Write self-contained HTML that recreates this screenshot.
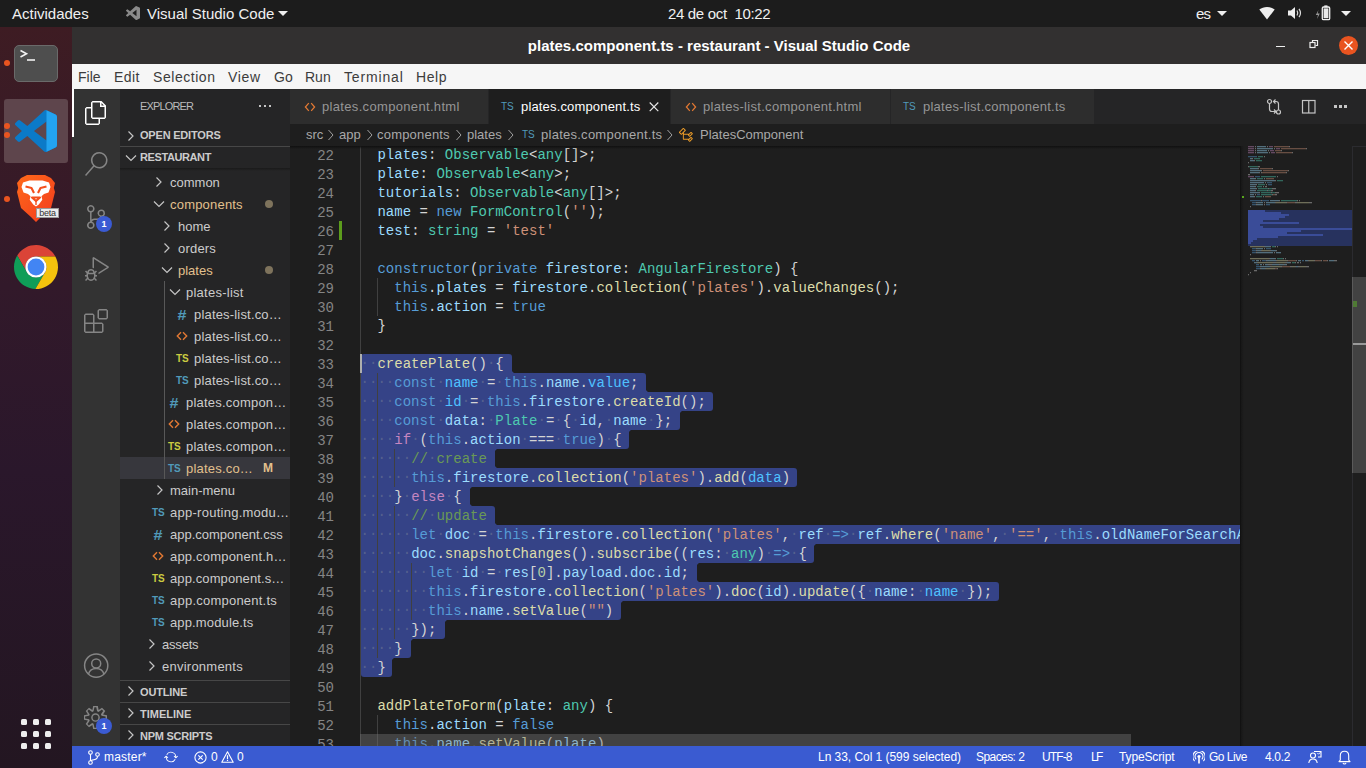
<!DOCTYPE html>
<html><head><meta charset="utf-8">
<style>
*{margin:0;padding:0;box-sizing:border-box}
html,body{width:1366px;height:768px;overflow:hidden;background:#1e1e1e;font-family:"Liberation Sans",sans-serif}
.a{position:absolute}
.t{position:absolute;white-space:pre}
#top{left:0;top:0;width:1366px;height:27px;background:#1c1c1c;color:#f0f0f0;font-size:15px}
#dock{left:0;top:27px;width:72px;height:741px;background:linear-gradient(180deg,#3e1c23 0%,#32192a 35%,#2a172b 60%,#231621 100%)}
#title{left:72px;top:27px;width:1294px;height:37px;background:#323030;color:#fff;font-weight:bold;font-size:14.5px}
#menu{left:72px;top:64px;width:1294px;height:25px;background:#f6f6f6;color:#2d2d2d;font-size:14px}
#act{left:72px;top:89px;width:48px;height:657px;background:#333333}
#side{left:120px;top:89px;width:170px;height:657px;background:#252526;color:#cccccc;font-size:13px}
#tabs{left:290px;top:89px;width:1076px;height:35px;background:#252526}
#crumb{left:290px;top:124px;width:1076px;height:22px;background:#1e1e1e;color:#a9a9a9;font-size:13px}
#ed{left:290px;top:146px;width:950px;height:600px;background:#1e1e1e;overflow:hidden}
#status{left:72px;top:746px;width:1294px;height:22px;background:#3a5bd1;color:#fff;font-size:12.5px}
.ln{position:absolute;left:0;width:44px;text-align:right;height:19px;line-height:19px;font-family:"Liberation Mono",monospace;font-size:14px;color:#858585}
.cl{position:absolute;left:70.6px;letter-spacing:0.018px;height:19px;line-height:19px;font-family:"Liberation Mono",monospace;font-size:14px;white-space:pre;color:#d4d4d4}
.sel{background:#354387;border-radius:3px}
.d{font-style:normal;color:#55618f;position:relative;top:-1px}
</style></head><body>
<div id="top" class="a"><div class="t" style="left:12px;top:4px;font-size:15px;line-height:20px">Actividades</div><svg class="a" style="left:126px;top:6px" width="14" height="14" viewBox="0 0 100 100"><path fill="#8a8a8a" d="M96.5 10.8 75.9.9a6.2 6.2 0 0 0-7.1 1.2L29.4 38 12.2 25a4.2 4.2 0 0 0-5.3.2l-5.5 5a4.2 4.2 0 0 0 0 6.2L16.3 50 1.4 63.6a4.2 4.2 0 0 0 0 6.2l5.5 5a4.2 4.2 0 0 0 5.3.2l17.2-13 39.4 36a6.2 6.2 0 0 0 7.1 1.2l20.6-9.9a6.3 6.3 0 0 0 3.5-5.6V16.4a6.3 6.3 0 0 0-3.5-5.6zM75 72.7 45.1 50 75 27.3z"/></svg><div class="t" style="left:147px;top:4px;font-size:15px;line-height:20px">Visual Studio Code</div><svg class="a" style="left:278px;top:11px" width="10" height="5"><path d="M0 0h10L5 5z" fill="#eee"/></svg><div class="t" style="left:668px;top:4px;font-size:15px;line-height:20px;letter-spacing:-0.33px">24 de oct  10:22</div><div class="t" style="left:1196px;top:4px;font-size:15px;line-height:20px;letter-spacing:-0.8px">es</div><svg class="a" style="left:1217px;top:11px" width="10" height="5"><path d="M0 0h10L5 5z" fill="#eee"/></svg><svg class="a" style="left:1259px;top:6px" width="16" height="14" viewBox="0 0 16 14"><path d="M8 13.5 0.3 3.6C2.4 2 5.1 1 8 1s5.6 1 7.7 2.6z" fill="#eee"/></svg><svg class="a" style="left:1287px;top:6px" width="16" height="14" viewBox="0 0 16 14"><path d="M1 4.5h3L8 1v12L4 9.5H1z" fill="#eee"/><path d="M10 4.5q1.5 2.5 0 5M12 2.8q3 4.2 0 8.4" stroke="#ddd" stroke-width="1.2" fill="none"/></svg><svg class="a" style="left:1314px;top:4px" width="18" height="18" viewBox="0 0 18 18"><path d="M4.5 6 1.8 11h2.2l-1 4 2.8-5.6H3.6z" fill="#9a9a9a"/><rect x="10.3" y="1.4" width="3.2" height="2" fill="#eee"/><rect x="8.3" y="3" width="7.4" height="12.6" rx="1.2" fill="none" stroke="#eee" stroke-width="1.3"/><rect x="9.6" y="4.4" width="4.8" height="9.8" fill="#e8e8e8"/></svg><svg class="a" style="left:1341px;top:11px" width="10" height="5"><path d="M0 0h10L5 5z" fill="#eee"/></svg></div><div id="dock" class="a"><div class="a" style="left:14px;top:18px;width:44px;height:37px;border-radius:5px;background:#4e4e4e;border:1px solid #6a6a6a"></div><svg class="a" style="left:19px;top:22px" width="18" height="13"><path d="M1.5 1.5 7.5 4.8 1.5 8" stroke="#f2f2f2" stroke-width="1.6" fill="none"/><path d="M8 11h8" stroke="#f2f2f2" stroke-width="1.6"/></svg><div class="a" style="left:4px;top:33px;width:6px;height:6px;border-radius:3px;background:#e95420"></div><div class="a" style="left:4px;top:72px;width:64px;height:64px;border-radius:3px;background:#5e454c"></div><div class="a" style="left:4px;top:96px;width:6px;height:6px;border-radius:3px;background:#e95420"></div><div class="a" style="left:4px;top:105px;width:6px;height:6px;border-radius:3px;background:#e95420"></div><svg class="a" style="left:15px;top:83px" width="42" height="42" viewBox="0 0 100 100"><path fill="#0b7ac8" d="M96.5 10.8 75.9.9a6.2 6.2 0 0 0-7.1 1.2L29.4 38 12.2 25a4.2 4.2 0 0 0-5.3.2l-5.5 5a4.2 4.2 0 0 0 0 6.2L16.3 50 1.4 63.6a4.2 4.2 0 0 0 0 6.2l5.5 5a4.2 4.2 0 0 0 5.3.2l17.2-13 39.4 36a6.2 6.2 0 0 0 7.1 1.2l20.6-9.9a6.3 6.3 0 0 0 3.5-5.6V16.4a6.3 6.3 0 0 0-3.5-5.6zM75 72.7 45.1 50 75 27.3z"/><path fill="#23a3f0" d="M75 0.5 96.5 10.8a6.3 6.3 0 0 1 3.5 5.6v67.2a6.3 6.3 0 0 1-3.5 5.6L75 99.5z"/></svg><svg class="a" style="left:15px;top:147px" width="42" height="49" viewBox="0 0 42 49"><defs><linearGradient id="bg1" x1="0" y1="0" x2="1" y2="1"><stop offset="0" stop-color="#ff6a1a"/><stop offset="1" stop-color="#f23a1e"/></linearGradient></defs><path d="M6 4 12 1h18l6 3 4 5-1.2 5 1.2 4-4 16-10 9-5 5-5-5-10-9-4-16 1.2-4L2 9z" fill="url(#bg1)"/><path d="M8 8.5 14.5 6.5h13l6.5 2 1.5 4.5-2 5.5-4.5 1.5-2.5 2.2 0.8 3.5-3.5 4.8-2.8 2-2.8-2-3.5-4.8 0.8-3.5-2.5-2.2-4.5-1.5-2-5.5z" fill="#ffffff"/><path d="M10.5 12.5 16.5 14 19 19M31.5 12.5 25.5 14 23 19M17 23.5h8l-4 3.5z" fill="none" stroke="#f4501e" stroke-width="2.1" stroke-linejoin="round"/><path d="M21 27v4" stroke="#f4501e" stroke-width="1.4"/></svg><div class="a" style="left:36px;top:181px;width:23px;height:10px;background:#ececec;border:1px solid #9a9a9a;font-size:9px;line-height:8px;color:#333;text-align:center;letter-spacing:-0.2px">beta</div><div class="a" style="left:4px;top:169px;width:6px;height:6px;border-radius:3px;background:#e95420"></div><svg class="a" style="left:14px;top:218px" width="44" height="44" viewBox="-22 -22 44 44"><path d="M19.33 -10.50 A22 22 0 0 0 -18.76 -11.49 L-9.09 5.25 A10.5 10.5 0 0 1 0.00 -10.50 Z" fill="#db4437"/><path d="M19.33 -10.50 A22 22 0 0 0 -18.76 -11.49 L-9.09 5.25 A10.5 10.5 0 0 1 0.00 -10.50 Z" fill="#0f9d58" transform="rotate(-120)"/><path d="M19.33 -10.50 A22 22 0 0 0 -18.76 -11.49 L-9.09 5.25 A10.5 10.5 0 0 1 0.00 -10.50 Z" fill="#f4c20d" transform="rotate(120)"/><circle r="10.6" fill="#fff"/><circle r="8.4" fill="#4285f4"/></svg><div class="a" style="left:21px;top:692px;width:6px;height:6px;border-radius:1.5px;background:#eeeeee"></div><div class="a" style="left:21px;top:704px;width:6px;height:6px;border-radius:1.5px;background:#eeeeee"></div><div class="a" style="left:21px;top:716px;width:6px;height:6px;border-radius:1.5px;background:#eeeeee"></div><div class="a" style="left:33px;top:692px;width:6px;height:6px;border-radius:1.5px;background:#eeeeee"></div><div class="a" style="left:33px;top:704px;width:6px;height:6px;border-radius:1.5px;background:#eeeeee"></div><div class="a" style="left:33px;top:716px;width:6px;height:6px;border-radius:1.5px;background:#eeeeee"></div><div class="a" style="left:45px;top:692px;width:6px;height:6px;border-radius:1.5px;background:#eeeeee"></div><div class="a" style="left:45px;top:704px;width:6px;height:6px;border-radius:1.5px;background:#eeeeee"></div><div class="a" style="left:45px;top:716px;width:6px;height:6px;border-radius:1.5px;background:#eeeeee"></div></div><div id="title" class="a"><div class="t" style="left:0px;top:10px;width:1294px;text-align:center;font-size:15px;line-height:18px;font-weight:bold;left:0">plates.component.ts - restaurant - Visual Studio Code</div><div class="a" style="left:1204px;top:19px;width:9px;height:1.2px;background:#eee"></div><svg class="a" style="left:1237px;top:12px" width="10" height="10"><rect x="1" y="3.5" width="5" height="5" fill="none" stroke="#eee" stroke-width="1.2"/><path d="M3.5 3.5V1.5h5v5h-2" fill="none" stroke="#eee" stroke-width="1.2"/></svg><div class="a" style="left:1267px;top:9px;width:19px;height:19px;border-radius:50%;background:#e95420"></div><svg class="a" style="left:1271px;top:13px" width="11" height="11"><path d="M1.5 1.5l8 8M9.5 1.5l-8 8" stroke="#fff" stroke-width="1.4"/></svg></div><div id="menu" class="a"><div class="t" style="left:6px;top:5px;font-size:14px;line-height:17px;color:#3c3c3c;letter-spacing:0px">File</div><div class="t" style="left:42px;top:5px;font-size:14px;line-height:17px;color:#3c3c3c;letter-spacing:0.4px">Edit</div><div class="t" style="left:81px;top:5px;font-size:14px;line-height:17px;color:#3c3c3c;letter-spacing:0.55px">Selection</div><div class="t" style="left:156px;top:5px;font-size:14px;line-height:17px;color:#3c3c3c;letter-spacing:0.7px">View</div><div class="t" style="left:202px;top:5px;font-size:14px;line-height:17px;color:#3c3c3c;letter-spacing:0px">Go</div><div class="t" style="left:233px;top:5px;font-size:14px;line-height:17px;color:#3c3c3c;letter-spacing:0px">Run</div><div class="t" style="left:272px;top:5px;font-size:14px;line-height:17px;color:#3c3c3c;letter-spacing:0.85px">Terminal</div><div class="t" style="left:344px;top:5px;font-size:14px;line-height:17px;color:#3c3c3c;letter-spacing:0.6px">Help</div></div><div id="act" class="a"><div class="a" style="left:0;top:0;width:2px;height:48px;background:#ffffff"></div><svg class="a" style="left:12px;top:12px" width="24" height="24" viewBox="0 0 24 24"><path fill="#ffffff" d="M17.5 0h-9L7 1.5V6H2.5L1 7.5v15.07L2.5 24h12.07L16 22.57V18h4.7l1.3-1.43V4.5L17.5 0zm0 2.12l2.38 2.38H17.5V2.12zm-3 20.38h-12v-15H7v9.07L8.5 18h6v4.5zm6-6h-12v-15H16V6h4.5v10.5z"/></svg><svg class="a" style="left:11.5px;top:63.3px" width="24" height="24" viewBox="0 0 24 24"><path fill="#858585" d="M15.25 0a8.25 8.25 0 0 0-6.18 13.72L1 22.88l1.12 1 8.05-9.12A8.251 8.251 0 1 0 15.25.01V0zm0 15a6.75 6.75 0 1 1 0-13.5 6.75 6.75 0 0 1 0 13.5z"/></svg><svg class="a" style="left:12px;top:115.6px" width="24" height="24" viewBox="0 0 24 24"><path fill="#858585" d="M21.007 8.222A3.738 3.738 0 0 0 15.045 5.2a3.737 3.737 0 0 0 1.156 6.583 2.988 2.988 0 0 1-2.668 1.67h-2.99a4.456 4.456 0 0 0-2.989 1.165V7.4a3.737 3.737 0 1 0-1.494 0v9.117a3.776 3.776 0 1 0 1.816.099 2.99 2.99 0 0 1 2.668-1.667h2.99a4.484 4.484 0 0 0 4.223-3.039 3.736 3.736 0 0 0 3.25-3.687zM4.565 3.738a2.242 2.242 0 1 1 4.484 0 2.242 2.242 0 0 1-4.484 0zm4.484 16.441a2.242 2.242 0 1 1-4.484 0 2.242 2.242 0 0 1 4.484 0zm8.221-9.715a2.242 2.242 0 1 1 0-4.485 2.242 2.242 0 0 1 0 4.485z"/></svg><div class="a" style="left:24px;top:127px;width:16px;height:16px;border-radius:8px;background:#3b5bd3;color:#fff;font-size:9px;font-weight:bold;line-height:16px;text-align:center">1</div><svg class="a" style="left:12.5px;top:168px" width="24" height="24" viewBox="0 0 24 24"><path fill="#858585" d="M10.94 13.5l-1.32 1.32a3.73 3.73 0 0 0-7.24 0L1.06 13.5 0 14.56l1.72 1.72-.22.22V18H0v1.5h1.5v.08c.077.489.214.966.41 1.42L0 22.940 1.06 24l1.650-1.65A4.308 4.308 0 0 0 6 24a4.31 4.31 0 0 0 3.29-1.65L10.94 24 12 22.94 10.09 21c.198-.464.336-.951.41-1.45v-.1H12V18h-1.5v-1.5l-.22-.22L12 14.56l-1.06-1.06zM6 13.5a2.25 2.25 0 0 1 2.25 2.25h-4.5A2.25 2.25 0 0 1 6 13.5zm3 6a3.33 3.330 0 0 1-3 3 3.33 3.33 0 0 1-3-3v-2.25h6v2.25zm14.76-9.9v1.26L13.5 17.37V15.6l8.5-5.37L9 2v9.46a5.07 5.07 0 0 0-1.5-.72V.63L8.64 0l15.12 9.6z"/></svg><svg class="a" style="left:12px;top:220px" width="24" height="24" viewBox="0 0 24 24"><path fill="#858585" d="M13.5 1.5L15 0h7.5L24 1.5V9l-1.5 1.5H15L13.5 9V1.5zm1.5 0V9h7.5V1.5H15zM0 15V6l1.5-1.5H9L10.5 6v7.5H18l1.5 1.5v7.5L18 24H1.5L0 22.5V15zm9-1.5V6H1.5v7.5H9zM9 15H1.5v7.5H9V15zm1.5 7.5H18V15h-7.5v7.5z"/></svg><svg class="a" style="left:11px;top:564px" width="26" height="26" viewBox="0 0 26 26"><circle cx="13.2" cy="12.6" r="11.6" fill="none" stroke="#858585" stroke-width="1.5"/><circle cx="13.2" cy="10.5" r="4.5" fill="none" stroke="#858585" stroke-width="1.5"/><path d="M5.5 21q1.5-5.5 7.7-5.5t7.7 5.5" fill="none" stroke="#858585" stroke-width="1.5"/></svg><svg class="a" style="left:12px;top:617px" width="23" height="23" viewBox="0 0 24 24"><path fill="#858585" d="M19.85 8.75l4.15.83v4.84l-4.15.83 2.35 3.52-3.43 3.43-3.52-2.35-.83 4.15H9.58l-.83-4.15-3.52 2.35-3.43-3.43 2.35-3.52L0 14.42V9.58l4.15-.83L1.8 5.23 5.23 1.8l3.52 2.35L9.580 0h4.84l.83 4.15 3.52-2.35 3.43 3.43-2.35 3.52zm-1.57 5.07l4.22-.84v-1.96l-4.22-.84-.6-1.45 2.38-3.58-1.39-1.39-3.58 2.39-1.45-.6-.84-4.22h-1.96l-.84 4.22-1.45.6-3.58-2.38-1.39 1.39 2.39 3.58-.6 1.45-4.22.84v1.96l4.22.84.6 1.45-2.38 3.58 1.39 1.39 3.58-2.39 1.45.6.84 4.22h1.960l.84-4.22 1.45-.6 3.58 2.38 1.39-1.39-2.39-3.58.6-1.45zM12 7.5a4.5 4.5 0 1 1 0 9 4.5 4.5 0 0 1 0-9zm0 1.5a3 3 0 1 0 0 6 3 3 0 0 0 0-6z"/></svg><div class="a" style="left:24px;top:629px;width:16px;height:16px;border-radius:8px;background:#3b5bd3;color:#fff;font-size:9px;font-weight:bold;line-height:16px;text-align:center">1</div></div><div id="side" class="a"><div class="t" style="left:20px;top:10px;font-size:11px;line-height:14px;color:#bbbbbb;letter-spacing:-0.85px">EXPLORER</div><div class="a" style="left:139px;top:16px;width:2px;height:2px;background:#c5c5c5"></div><div class="a" style="left:144px;top:16px;width:2px;height:2px;background:#c5c5c5"></div><div class="a" style="left:149px;top:16px;width:2px;height:2px;background:#c5c5c5"></div><svg class="a" style="left:6.5px;top:41px" width="8" height="12"><path d="M1.5 1.5 6 6 1.5 10.5" fill="none" stroke="#c5c5c5" stroke-width="1.2"/></svg><div class="t" style="left:20px;top:39px;font-size:11px;line-height:14px;font-weight:bold;color:#cccccc;letter-spacing:-0.2px">OPEN EDITORS</div><div class="a" style="left:0;top:57px;width:170px;height:1px;background:#474747"></div><svg class="a" style="left:5px;top:65px" width="12" height="8"><path d="M1 1.5 6 6.5 11 1.5" fill="none" stroke="#c5c5c5" stroke-width="1.2"/></svg><div class="t" style="left:20px;top:61px;font-size:11px;line-height:14px;font-weight:bold;color:#cccccc;letter-spacing:-0.4px">RESTAURANT</div><div class="a" style="left:0;top:79px;width:170px;height:3px;background:linear-gradient(#1a1a1a,rgba(37,37,38,0))"></div><div class="a" style="left:0;top:368px;width:170px;height:22px;background:#37373d"></div><div class="a" style="left:44px;top:192px;width:1px;height:198px;background:#585858"></div><svg class="a" style="left:34.8px;top:87px" width="8" height="12"><path d="M1.5 1.5 6 6 1.5 10.5" fill="none" stroke="#c5c5c5" stroke-width="1.2"/></svg><div class="t" style="left:50px;top:83px;font-size:13px;line-height:22px;color:#cccccc;letter-spacing:0px">common</div><svg class="a" style="left:33.2px;top:111px" width="12" height="8"><path d="M1 1.5 6 6.5 11 1.5" fill="none" stroke="#c5c5c5" stroke-width="1.2"/></svg><div class="t" style="left:50px;top:105px;font-size:13px;line-height:22px;color:#e2c08d;letter-spacing:0.2px">components</div><div class="a" style="left:145px;top:111px;width:8px;height:8px;border-radius:4px;background:#7e735c"></div><svg class="a" style="left:42.8px;top:131px" width="8" height="12"><path d="M1.5 1.5 6 6 1.5 10.5" fill="none" stroke="#c5c5c5" stroke-width="1.2"/></svg><div class="t" style="left:58px;top:127px;font-size:13px;line-height:22px;color:#cccccc;letter-spacing:0px">home</div><svg class="a" style="left:42.8px;top:153px" width="8" height="12"><path d="M1.5 1.5 6 6 1.5 10.5" fill="none" stroke="#c5c5c5" stroke-width="1.2"/></svg><div class="t" style="left:58px;top:149px;font-size:13px;line-height:22px;color:#cccccc;letter-spacing:0.2px">orders</div><svg class="a" style="left:41.2px;top:177px" width="12" height="8"><path d="M1 1.5 6 6.5 11 1.5" fill="none" stroke="#c5c5c5" stroke-width="1.2"/></svg><div class="t" style="left:58px;top:171px;font-size:13px;line-height:22px;color:#e2c08d;letter-spacing:0px">plates</div><div class="a" style="left:145px;top:177px;width:8px;height:8px;border-radius:4px;background:#7e735c"></div><svg class="a" style="left:49.2px;top:199px" width="12" height="8"><path d="M1 1.5 6 6.5 11 1.5" fill="none" stroke="#c5c5c5" stroke-width="1.2"/></svg><div class="t" style="left:66px;top:193px;font-size:13px;line-height:22px;color:#cccccc;letter-spacing:0.25px">plates-list</div><div class="t" style="left:58px;top:215px;font-size:14px;line-height:22px;font-weight:bold;color:#519aba;transform:scaleX(1.15)">#</div><div class="t" style="left:74px;top:215px;font-size:13px;line-height:22px;color:#cccccc;letter-spacing:0.18px">plates-list.co…</div><svg class="a" style="left:56px;top:242px" width="12" height="10"><path d="M5 1.2 1.3 5 5 8.8M7 1.2 10.7 5 7 8.8" fill="none" stroke="#e37933" stroke-width="1.4"/></svg><div class="t" style="left:74px;top:237px;font-size:13px;line-height:22px;color:#cccccc;letter-spacing:0.18px">plates-list.co…</div><div class="t" style="left:56px;top:259px;font-size:10px;line-height:22px;font-weight:bold;color:#cbcb41">TS</div><div class="t" style="left:74px;top:259px;font-size:13px;line-height:22px;color:#cccccc;letter-spacing:0.18px">plates-list.co…</div><div class="t" style="left:56px;top:281px;font-size:10px;line-height:22px;font-weight:bold;color:#519aba">TS</div><div class="t" style="left:74px;top:281px;font-size:13px;line-height:22px;color:#cccccc;letter-spacing:0.18px">plates-list.co…</div><div class="t" style="left:50px;top:303px;font-size:14px;line-height:22px;font-weight:bold;color:#519aba;transform:scaleX(1.15)">#</div><div class="t" style="left:66px;top:303px;font-size:13px;line-height:22px;color:#cccccc;letter-spacing:0.21px">plates.compon…</div><svg class="a" style="left:48px;top:330px" width="12" height="10"><path d="M5 1.2 1.3 5 5 8.8M7 1.2 10.7 5 7 8.8" fill="none" stroke="#e37933" stroke-width="1.4"/></svg><div class="t" style="left:66px;top:325px;font-size:13px;line-height:22px;color:#cccccc;letter-spacing:0.21px">plates.compon…</div><div class="t" style="left:48px;top:347px;font-size:10px;line-height:22px;font-weight:bold;color:#cbcb41">TS</div><div class="t" style="left:66px;top:347px;font-size:13px;line-height:22px;color:#cccccc;letter-spacing:0.21px">plates.compon…</div><div class="t" style="left:48px;top:369px;font-size:10px;line-height:22px;font-weight:bold;color:#519aba">TS</div><div class="t" style="left:66px;top:369px;font-size:13px;line-height:22px;color:#e2c08d;letter-spacing:0.2px">plates.co…</div><div class="t" style="left:143px;top:368px;font-size:12px;line-height:22px;font-weight:bold;color:#e2c08d">M</div><svg class="a" style="left:35.8px;top:395px" width="8" height="12"><path d="M1.5 1.5 6 6 1.5 10.5" fill="none" stroke="#c5c5c5" stroke-width="1.2"/></svg><div class="t" style="left:50px;top:391px;font-size:13px;line-height:22px;color:#cccccc;letter-spacing:0px">main-menu</div><div class="t" style="left:32px;top:413px;font-size:10px;line-height:22px;font-weight:bold;color:#519aba">TS</div><div class="t" style="left:50px;top:413px;font-size:13px;line-height:22px;color:#cccccc;letter-spacing:0.26px">app-routing.modu…</div><div class="t" style="left:34px;top:435px;font-size:14px;line-height:22px;font-weight:bold;color:#519aba;transform:scaleX(1.15)">#</div><div class="t" style="left:50px;top:435px;font-size:13px;line-height:22px;color:#cccccc;letter-spacing:0px">app.component.css</div><svg class="a" style="left:32px;top:462px" width="12" height="10"><path d="M5 1.2 1.3 5 5 8.8M7 1.2 10.7 5 7 8.8" fill="none" stroke="#e37933" stroke-width="1.4"/></svg><div class="t" style="left:50px;top:457px;font-size:13px;line-height:22px;color:#cccccc;letter-spacing:0.2px">app.component.h…</div><div class="t" style="left:32px;top:479px;font-size:10px;line-height:22px;font-weight:bold;color:#cbcb41">TS</div><div class="t" style="left:50px;top:479px;font-size:13px;line-height:22px;color:#cccccc;letter-spacing:0.1px">app.component.s…</div><div class="t" style="left:32px;top:501px;font-size:10px;line-height:22px;font-weight:bold;color:#519aba">TS</div><div class="t" style="left:50px;top:501px;font-size:13px;line-height:22px;color:#cccccc;letter-spacing:0.23px">app.component.ts</div><div class="t" style="left:32px;top:523px;font-size:10px;line-height:22px;font-weight:bold;color:#519aba">TS</div><div class="t" style="left:50px;top:523px;font-size:13px;line-height:22px;color:#cccccc;letter-spacing:0.14px">app.module.ts</div><svg class="a" style="left:27.8px;top:549px" width="8" height="12"><path d="M1.5 1.5 6 6 1.5 10.5" fill="none" stroke="#c5c5c5" stroke-width="1.2"/></svg><div class="t" style="left:42px;top:545px;font-size:13px;line-height:22px;color:#cccccc;letter-spacing:-0.2px">assets</div><svg class="a" style="left:27.8px;top:571px" width="8" height="12"><path d="M1.5 1.5 6 6 1.5 10.5" fill="none" stroke="#c5c5c5" stroke-width="1.2"/></svg><div class="t" style="left:42px;top:567px;font-size:13px;line-height:22px;color:#cccccc;letter-spacing:0.24px">environments</div><div class="a" style="left:0;top:591px;width:170px;height:1px;background:#474747"></div><svg class="a" style="left:6.5px;top:596px" width="8" height="12"><path d="M1.5 1.5 6 6 1.5 10.5" fill="none" stroke="#c5c5c5" stroke-width="1.2"/></svg><div class="t" style="left:20px;top:596px;font-size:11px;line-height:14px;font-weight:bold;color:#cccccc;letter-spacing:-0.15px">OUTLINE</div><div class="a" style="left:0;top:613px;width:170px;height:1px;background:#474747"></div><svg class="a" style="left:6.5px;top:618px" width="8" height="12"><path d="M1.5 1.5 6 6 1.5 10.5" fill="none" stroke="#c5c5c5" stroke-width="1.2"/></svg><div class="t" style="left:20px;top:618px;font-size:11px;line-height:14px;font-weight:bold;color:#cccccc;letter-spacing:0px">TIMELINE</div><div class="a" style="left:0;top:635px;width:170px;height:1px;background:#474747"></div><svg class="a" style="left:6.5px;top:640px" width="8" height="12"><path d="M1.5 1.5 6 6 1.5 10.5" fill="none" stroke="#c5c5c5" stroke-width="1.2"/></svg><div class="t" style="left:20px;top:640px;font-size:11px;line-height:14px;font-weight:bold;color:#cccccc;letter-spacing:-0.25px">NPM SCRIPTS</div></div><div id="tabs" class="a"><div class="a" style="left:0px;top:0;width:199px;height:35px;background:#2d2d2d;border-right:1px solid #252526"></div><svg class="a" style="left:14px;top:13px" width="12" height="10"><path d="M4.8 1.2 1.4 5 4.8 8.8M7.2 1.2 10.6 5 7.2 8.8" fill="none" stroke="#e37933" stroke-width="1.25"/></svg><div class="t" style="left:32px;top:9px;font-size:13px;line-height:17px;letter-spacing:0.33px;color:#969696">plates.component.html</div><div class="a" style="left:199px;top:0;width:182px;height:35px;background:#1e1e1e;border-right:1px solid #252526"></div><div class="t" style="left:211px;top:7px;font-size:10px;line-height:22px;color:#519aba">TS</div><div class="t" style="left:231px;top:9px;font-size:13px;line-height:17px;letter-spacing:0.16px;color:#ffffff">plates.component.ts</div><svg class="a" style="left:358px;top:12px" width="12" height="12"><path d="M1.7 1.5l8.6 8.6M10.3 1.5l-8.6 8.6" stroke="#e8e8e8" stroke-width="1.15"/></svg><div class="a" style="left:381px;top:0;width:220px;height:35px;background:#2d2d2d;border-right:1px solid #252526"></div><svg class="a" style="left:395px;top:13px" width="12" height="10"><path d="M4.8 1.2 1.4 5 4.8 8.8M7.2 1.2 10.6 5 7.2 8.8" fill="none" stroke="#e37933" stroke-width="1.25"/></svg><div class="t" style="left:413px;top:9px;font-size:13px;line-height:17px;letter-spacing:0.3px;color:#969696">plates-list.component.html</div><div class="a" style="left:601px;top:0;width:204px;height:35px;background:#2d2d2d;border-right:1px solid #252526"></div><div class="t" style="left:613px;top:7px;font-size:10px;line-height:22px;color:#519aba">TS</div><div class="t" style="left:633px;top:9px;font-size:13px;line-height:17px;letter-spacing:0.25px;color:#969696">plates-list.component.ts</div><svg class="a" style="left:976px;top:9px" width="18" height="18" viewBox="0 0 18 18"><circle cx="3.5" cy="3.5" r="2" fill="none" stroke="#c5c5c5" stroke-width="1.2"/><circle cx="12.5" cy="14" r="2" fill="none" stroke="#c5c5c5" stroke-width="1.2"/><path d="M3.5 5.5v5.5q0 2.5 2.5 2.5h3.5M8 11.5l2 2-2 2M12.5 12v-6q0-2.5-2.5-2.5H7.5M9.5 1.5l-2 2 2 2" fill="none" stroke="#c5c5c5" stroke-width="1.2"/></svg><svg class="a" style="left:1011px;top:10px" width="16" height="16" viewBox="0 0 16 16"><rect x="1.5" y="1.5" width="12.5" height="12.5" fill="none" stroke="#c5c5c5" stroke-width="1.2"/><path d="M7.75 1.5v12.5" stroke="#c5c5c5" stroke-width="1.2"/></svg><div class="a" style="left:1044px;top:16px;width:2.5px;height:2.5px;background:#c5c5c5"></div><div class="a" style="left:1049px;top:16px;width:2.5px;height:2.5px;background:#c5c5c5"></div><div class="a" style="left:1054px;top:16px;width:2.5px;height:2.5px;background:#c5c5c5"></div></div><div id="crumb" class="a"><div class="t" style="left:16px;top:2px;font-size:13px;line-height:17px;color:#a9a9a9;letter-spacing:0px">src</div><div class="t" style="left:49px;top:2px;font-size:13px;line-height:17px;color:#a9a9a9;letter-spacing:0px">app</div><div class="t" style="left:87px;top:2px;font-size:13px;line-height:17px;color:#a9a9a9;letter-spacing:0.2px">components</div><div class="t" style="left:177px;top:2px;font-size:13px;line-height:17px;color:#a9a9a9;letter-spacing:0px">plates</div><svg class="a" style="left:37px;top:5px" width="8" height="12"><path d="M1.5 1 6 6 1.5 11" fill="none" stroke="#a0a0a0" stroke-width="1"/></svg><svg class="a" style="left:75.5px;top:5px" width="8" height="12"><path d="M1.5 1 6 6 1.5 11" fill="none" stroke="#a0a0a0" stroke-width="1"/></svg><svg class="a" style="left:164.5px;top:5px" width="8" height="12"><path d="M1.5 1 6 6 1.5 11" fill="none" stroke="#a0a0a0" stroke-width="1"/></svg><svg class="a" style="left:217px;top:5px" width="8" height="12"><path d="M1.5 1 6 6 1.5 11" fill="none" stroke="#a0a0a0" stroke-width="1"/></svg><svg class="a" style="left:375.5px;top:5px" width="8" height="12"><path d="M1.5 1 6 6 1.5 11" fill="none" stroke="#a0a0a0" stroke-width="1"/></svg><div class="t" style="left:232px;top:0px;font-size:10px;line-height:22px;color:#519aba">TS</div><div class="t" style="left:251px;top:2px;font-size:13px;line-height:17px;color:#a9a9a9;letter-spacing:0.26px">plates.component.ts</div><svg class="a" style="left:387.5px;top:2.5px" width="16" height="16" viewBox="0 0 16 16"><path fill="#ee9d28" d="M11.34 9.71h.71l2.67-2.67v-.71L13.38 5h-.7l-1.82 1.81h-5V5.56l1.86-1.85V3l-2-2H5L1 5v.71l2 2h.71l1.14-1.15v5.79l.5.5H10v.52l1.33 1.34h.71l2.67-2.67v-.71L13.37 10h-.7l-1.86 1.85h-5v-4H10v.48l1.34 1.38zm1.69-3.65l.63.63-2 2-.63-.63 2-2zm0 5l.63.63-2 2-.63-.63 2-2zM3.35 6.65l-1.29-1.3 3.29-3.29 1.3 1.29-3.3 3.3z"/></svg><div class="t" style="left:410px;top:2px;font-size:13px;line-height:17px;color:#a9a9a9">PlatesComponent</div></div><div class="a" id="ed"><div class="ln" style="top:1px">22</div><div class="ln" style="top:20px">23</div><div class="ln" style="top:39px">24</div><div class="ln" style="top:58px">25</div><div class="ln" style="top:77px">26</div><div class="ln" style="top:96px">27</div><div class="ln" style="top:115px">28</div><div class="ln" style="top:134px">29</div><div class="ln" style="top:153px">30</div><div class="ln" style="top:172px">31</div><div class="ln" style="top:191px">32</div><div class="ln" style="top:210px">33</div><div class="ln" style="top:229px">34</div><div class="ln" style="top:248px">35</div><div class="ln" style="top:267px">36</div><div class="ln" style="top:286px">37</div><div class="ln" style="top:305px">38</div><div class="ln" style="top:324px">39</div><div class="ln" style="top:343px">40</div><div class="ln" style="top:362px">41</div><div class="ln" style="top:381px">42</div><div class="ln" style="top:400px">43</div><div class="ln" style="top:419px">44</div><div class="ln" style="top:438px">45</div><div class="ln" style="top:457px">46</div><div class="ln" style="top:476px">47</div><div class="ln" style="top:495px">48</div><div class="ln" style="top:514px">49</div><div class="ln" style="top:533px">50</div><div class="ln" style="top:552px">51</div><div class="ln" style="top:571px">52</div><div class="ln" style="top:590px">53</div><div class="a" style="left:49px;top:75px;width:3px;height:19px;background:#5c9c1c"></div><div class="a" style="left:70.6px;top:208px;width:151.2px;height:19px;background:#354387;border-radius:3px 3px 0px 0px"></div><div class="a" style="left:221.8px;top:224px;width:3px;height:3px;background:radial-gradient(circle at 100% 0%,#1e1e1e 2.6px,#354387 3.4px)"></div><div class="a" style="left:70.6px;top:227px;width:285.6px;height:19px;background:#354387;border-radius:0px 3px 0px 0px"></div><div class="a" style="left:356.2px;top:243px;width:3px;height:3px;background:radial-gradient(circle at 100% 0%,#1e1e1e 2.6px,#354387 3.4px)"></div><div class="a" style="left:70.6px;top:246px;width:352.8px;height:19px;background:#354387;border-radius:0px 3px 3px 0px"></div><div class="a" style="left:70.6px;top:265px;width:319.2px;height:19px;background:#354387;border-radius:0px 0px 3px 0px"></div><div class="a" style="left:389.8px;top:265px;width:3px;height:3px;background:radial-gradient(circle at 100% 100%,#1e1e1e 2.6px,#354387 3.4px)"></div><div class="a" style="left:70.6px;top:284px;width:268.8px;height:19px;background:#354387;border-radius:0px 0px 3px 0px"></div><div class="a" style="left:339.4px;top:284px;width:3px;height:3px;background:radial-gradient(circle at 100% 100%,#1e1e1e 2.6px,#354387 3.4px)"></div><div class="a" style="left:70.6px;top:303px;width:134.4px;height:19px;background:#354387;border-radius:0px 0px 0px 0px"></div><div class="a" style="left:205.0px;top:303px;width:3px;height:3px;background:radial-gradient(circle at 100% 100%,#1e1e1e 2.6px,#354387 3.4px)"></div><div class="a" style="left:205.0px;top:319px;width:3px;height:3px;background:radial-gradient(circle at 100% 0%,#1e1e1e 2.6px,#354387 3.4px)"></div><div class="a" style="left:70.6px;top:322px;width:436.8px;height:19px;background:#354387;border-radius:0px 3px 3px 0px"></div><div class="a" style="left:70.6px;top:341px;width:109.2px;height:19px;background:#354387;border-radius:0px 0px 0px 0px"></div><div class="a" style="left:179.8px;top:341px;width:3px;height:3px;background:radial-gradient(circle at 100% 100%,#1e1e1e 2.6px,#354387 3.4px)"></div><div class="a" style="left:179.8px;top:357px;width:3px;height:3px;background:radial-gradient(circle at 100% 0%,#1e1e1e 2.6px,#354387 3.4px)"></div><div class="a" style="left:70.6px;top:360px;width:134.4px;height:19px;background:#354387;border-radius:0px 3px 0px 0px"></div><div class="a" style="left:205.0px;top:376px;width:3px;height:3px;background:radial-gradient(circle at 100% 0%,#1e1e1e 2.6px,#354387 3.4px)"></div><div class="a" style="left:70.6px;top:379px;width:982.8px;height:19px;background:#354387;border-radius:0px 3px 3px 0px"></div><div class="a" style="left:70.6px;top:398px;width:453.6px;height:19px;background:#354387;border-radius:0px 0px 3px 0px"></div><div class="a" style="left:524.2px;top:398px;width:3px;height:3px;background:radial-gradient(circle at 100% 100%,#1e1e1e 2.6px,#354387 3.4px)"></div><div class="a" style="left:70.6px;top:417px;width:336.0px;height:19px;background:#354387;border-radius:0px 0px 0px 0px"></div><div class="a" style="left:406.6px;top:417px;width:3px;height:3px;background:radial-gradient(circle at 100% 100%,#1e1e1e 2.6px,#354387 3.4px)"></div><div class="a" style="left:406.6px;top:433px;width:3px;height:3px;background:radial-gradient(circle at 100% 0%,#1e1e1e 2.6px,#354387 3.4px)"></div><div class="a" style="left:70.6px;top:436px;width:638.4px;height:19px;background:#354387;border-radius:0px 3px 3px 0px"></div><div class="a" style="left:70.6px;top:455px;width:260.4px;height:19px;background:#354387;border-radius:0px 0px 3px 0px"></div><div class="a" style="left:331.0px;top:455px;width:3px;height:3px;background:radial-gradient(circle at 100% 100%,#1e1e1e 2.6px,#354387 3.4px)"></div><div class="a" style="left:70.6px;top:474px;width:84.0px;height:19px;background:#354387;border-radius:0px 0px 3px 0px"></div><div class="a" style="left:154.6px;top:474px;width:3px;height:3px;background:radial-gradient(circle at 100% 100%,#1e1e1e 2.6px,#354387 3.4px)"></div><div class="a" style="left:70.6px;top:493px;width:50.4px;height:19px;background:#354387;border-radius:0px 0px 3px 0px"></div><div class="a" style="left:121.0px;top:493px;width:3px;height:3px;background:radial-gradient(circle at 100% 100%,#1e1e1e 2.6px,#354387 3.4px)"></div><div class="a" style="left:70.6px;top:512px;width:31.2px;height:19px;background:#354387;border-radius:0px 0px 3px 3px"></div><div class="a" style="left:101.8px;top:512px;width:3px;height:3px;background:radial-gradient(circle at 100% 100%,#1e1e1e 2.6px,#354387 3.4px)"></div><div class="a" style="left:70px;top:-1px;width:1px;height:608px;background:#404040"></div><div class="a" style="left:87px;top:132px;width:1px;height:38px;background:#404040"></div><div class="a" style="left:87px;top:227px;width:1px;height:285px;background:#404040"></div><div class="a" style="left:87px;top:569px;width:1px;height:38px;background:#404040"></div><div class="a" style="left:104px;top:303px;width:1px;height:38px;background:#404040"></div><div class="a" style="left:104px;top:360px;width:1px;height:133px;background:#404040"></div><div class="a" style="left:121px;top:417px;width:1px;height:57px;background:#404040"></div><div class="cl" style="top:0px"><span style="color:#d4d4d4">  </span><span style="color:#9cdcfe">plates</span><span style="color:#d4d4d4">: </span><span style="color:#4ec9b0">Observable</span><span style="color:#d4d4d4">&lt;</span><span style="color:#4ec9b0">any</span><span style="color:#d4d4d4">[]&gt;;</span></div><div class="cl" style="top:19px"><span style="color:#d4d4d4">  </span><span style="color:#9cdcfe">plate</span><span style="color:#d4d4d4">: </span><span style="color:#4ec9b0">Observable</span><span style="color:#d4d4d4">&lt;</span><span style="color:#4ec9b0">any</span><span style="color:#d4d4d4">&gt;;</span></div><div class="cl" style="top:38px"><span style="color:#d4d4d4">  </span><span style="color:#9cdcfe">tutorials</span><span style="color:#d4d4d4">: </span><span style="color:#4ec9b0">Observable</span><span style="color:#d4d4d4">&lt;</span><span style="color:#4ec9b0">any</span><span style="color:#d4d4d4">[]&gt;;</span></div><div class="cl" style="top:57px"><span style="color:#d4d4d4">  </span><span style="color:#9cdcfe">name</span><span style="color:#d4d4d4"> = </span><span style="color:#569cd6">new</span><span style="color:#d4d4d4"> </span><span style="color:#4ec9b0">FormControl</span><span style="color:#d4d4d4">(</span><span style="color:#ce9178">&#x27;&#x27;</span><span style="color:#d4d4d4">);</span></div><div class="cl" style="top:76px"><span style="color:#d4d4d4">  </span><span style="color:#9cdcfe">test</span><span style="color:#d4d4d4">: </span><span style="color:#4ec9b0">string</span><span style="color:#d4d4d4"> = </span><span style="color:#ce9178">&#x27;test&#x27;</span></div><div class="cl" style="top:95px"></div><div class="cl" style="top:114px"><span style="color:#d4d4d4">  </span><span style="color:#569cd6">constructor</span><span style="color:#d4d4d4">(</span><span style="color:#569cd6">private</span><span style="color:#d4d4d4"> </span><span style="color:#9cdcfe">firestore</span><span style="color:#d4d4d4">: </span><span style="color:#4ec9b0">AngularFirestore</span><span style="color:#d4d4d4">) {</span></div><div class="cl" style="top:133px"><span style="color:#d4d4d4">    </span><span style="color:#569cd6">this</span><span style="color:#d4d4d4">.</span><span style="color:#9cdcfe">plates</span><span style="color:#d4d4d4"> = </span><span style="color:#9cdcfe">firestore</span><span style="color:#d4d4d4">.</span><span style="color:#dcdcaa">collection</span><span style="color:#d4d4d4">(</span><span style="color:#ce9178">&#x27;plates&#x27;</span><span style="color:#d4d4d4">).</span><span style="color:#dcdcaa">valueChanges</span><span style="color:#d4d4d4">();</span></div><div class="cl" style="top:152px"><span style="color:#d4d4d4">    </span><span style="color:#569cd6">this</span><span style="color:#d4d4d4">.</span><span style="color:#9cdcfe">action</span><span style="color:#d4d4d4"> = </span><span style="color:#569cd6">true</span></div><div class="cl" style="top:171px"><span style="color:#d4d4d4">  }</span></div><div class="cl" style="top:190px"></div><div class="cl" style="top:209px"><i class="d">·</i><i class="d">·</i><span style="color:#dcdcaa">createPlate</span><span style="color:#d4d4d4">()</span><i class="d">·</i><span style="color:#d4d4d4">{</span></div><div class="cl" style="top:228px"><i class="d">·</i><i class="d">·</i><i class="d">·</i><i class="d">·</i><span style="color:#569cd6">const</span><i class="d">·</i><span style="color:#4fc1ff">name</span><i class="d">·</i><span style="color:#d4d4d4">=</span><i class="d">·</i><span style="color:#569cd6">this</span><span style="color:#d4d4d4">.</span><span style="color:#9cdcfe">name</span><span style="color:#d4d4d4">.</span><span style="color:#4fc1ff">value</span><span style="color:#d4d4d4">;</span></div><div class="cl" style="top:247px"><i class="d">·</i><i class="d">·</i><i class="d">·</i><i class="d">·</i><span style="color:#569cd6">const</span><i class="d">·</i><span style="color:#4fc1ff">id</span><i class="d">·</i><span style="color:#d4d4d4">=</span><i class="d">·</i><span style="color:#569cd6">this</span><span style="color:#d4d4d4">.</span><span style="color:#9cdcfe">firestore</span><span style="color:#d4d4d4">.</span><span style="color:#dcdcaa">createId</span><span style="color:#d4d4d4">();</span></div><div class="cl" style="top:266px"><i class="d">·</i><i class="d">·</i><i class="d">·</i><i class="d">·</i><span style="color:#569cd6">const</span><i class="d">·</i><span style="color:#9cdcfe">data</span><span style="color:#d4d4d4">:</span><i class="d">·</i><span style="color:#4ec9b0">Plate</span><i class="d">·</i><span style="color:#d4d4d4">=</span><i class="d">·</i><span style="color:#d4d4d4">{</span><i class="d">·</i><span style="color:#9cdcfe">id</span><span style="color:#d4d4d4">,</span><i class="d">·</i><span style="color:#9cdcfe">name</span><i class="d">·</i><span style="color:#d4d4d4">};</span></div><div class="cl" style="top:285px"><i class="d">·</i><i class="d">·</i><i class="d">·</i><i class="d">·</i><span style="color:#c586c0">if</span><i class="d">·</i><span style="color:#d4d4d4">(</span><span style="color:#569cd6">this</span><span style="color:#d4d4d4">.</span><span style="color:#9cdcfe">action</span><i class="d">·</i><span style="color:#d4d4d4">===</span><i class="d">·</i><span style="color:#569cd6">true</span><span style="color:#d4d4d4">)</span><i class="d">·</i><span style="color:#d4d4d4">{</span></div><div class="cl" style="top:304px"><i class="d">·</i><i class="d">·</i><i class="d">·</i><i class="d">·</i><i class="d">·</i><i class="d">·</i><span style="color:#6a9955">//</span><i class="d">·</i><span style="color:#6a9955">create</span></div><div class="cl" style="top:323px"><i class="d">·</i><i class="d">·</i><i class="d">·</i><i class="d">·</i><i class="d">·</i><i class="d">·</i><span style="color:#569cd6">this</span><span style="color:#d4d4d4">.</span><span style="color:#9cdcfe">firestore</span><span style="color:#d4d4d4">.</span><span style="color:#dcdcaa">collection</span><span style="color:#d4d4d4">(</span><span style="color:#ce9178">&#x27;plates&#x27;</span><span style="color:#d4d4d4">).</span><span style="color:#dcdcaa">add</span><span style="color:#d4d4d4">(</span><span style="color:#4fc1ff">data</span><span style="color:#d4d4d4">)</span></div><div class="cl" style="top:342px"><i class="d">·</i><i class="d">·</i><i class="d">·</i><i class="d">·</i><span style="color:#d4d4d4">}</span><i class="d">·</i><span style="color:#c586c0">else</span><i class="d">·</i><span style="color:#d4d4d4">{</span></div><div class="cl" style="top:361px"><i class="d">·</i><i class="d">·</i><i class="d">·</i><i class="d">·</i><i class="d">·</i><i class="d">·</i><span style="color:#6a9955">//</span><i class="d">·</i><span style="color:#6a9955">update</span></div><div class="cl" style="top:380px"><i class="d">·</i><i class="d">·</i><i class="d">·</i><i class="d">·</i><i class="d">·</i><i class="d">·</i><span style="color:#569cd6">let</span><i class="d">·</i><span style="color:#9cdcfe">doc</span><i class="d">·</i><span style="color:#d4d4d4">=</span><i class="d">·</i><span style="color:#569cd6">this</span><span style="color:#d4d4d4">.</span><span style="color:#9cdcfe">firestore</span><span style="color:#d4d4d4">.</span><span style="color:#dcdcaa">collection</span><span style="color:#d4d4d4">(</span><span style="color:#ce9178">&#x27;plates&#x27;</span><span style="color:#d4d4d4">,</span><i class="d">·</i><span style="color:#9cdcfe">ref</span><i class="d">·</i><span style="color:#569cd6">=&gt;</span><i class="d">·</i><span style="color:#9cdcfe">ref</span><span style="color:#d4d4d4">.</span><span style="color:#dcdcaa">where</span><span style="color:#d4d4d4">(</span><span style="color:#ce9178">&#x27;name&#x27;</span><span style="color:#d4d4d4">,</span><i class="d">·</i><span style="color:#ce9178">&#x27;==&#x27;</span><span style="color:#d4d4d4">,</span><i class="d">·</i><span style="color:#569cd6">this</span><span style="color:#d4d4d4">.</span><span style="color:#9cdcfe">oldNameForSearchAndUpdate</span><span style="color:#d4d4d4">)</span><span style="color:#d4d4d4">);</span></div><div class="cl" style="top:399px"><i class="d">·</i><i class="d">·</i><i class="d">·</i><i class="d">·</i><i class="d">·</i><i class="d">·</i><span style="color:#9cdcfe">doc</span><span style="color:#d4d4d4">.</span><span style="color:#dcdcaa">snapshotChanges</span><span style="color:#d4d4d4">().</span><span style="color:#dcdcaa">subscribe</span><span style="color:#d4d4d4">((</span><span style="color:#9cdcfe">res</span><span style="color:#d4d4d4">:</span><i class="d">·</i><span style="color:#4ec9b0">any</span><span style="color:#d4d4d4">)</span><i class="d">·</i><span style="color:#569cd6">=&gt;</span><i class="d">·</i><span style="color:#d4d4d4">{</span></div><div class="cl" style="top:418px"><i class="d">·</i><i class="d">·</i><i class="d">·</i><i class="d">·</i><i class="d">·</i><i class="d">·</i><i class="d">·</i><i class="d">·</i><span style="color:#569cd6">let</span><i class="d">·</i><span style="color:#9cdcfe">id</span><i class="d">·</i><span style="color:#d4d4d4">=</span><i class="d">·</i><span style="color:#9cdcfe">res</span><span style="color:#d4d4d4">[</span><span style="color:#b5cea8">0</span><span style="color:#d4d4d4">].</span><span style="color:#9cdcfe">payload</span><span style="color:#d4d4d4">.</span><span style="color:#9cdcfe">doc</span><span style="color:#d4d4d4">.</span><span style="color:#9cdcfe">id</span><span style="color:#d4d4d4">;</span></div><div class="cl" style="top:437px"><i class="d">·</i><i class="d">·</i><i class="d">·</i><i class="d">·</i><i class="d">·</i><i class="d">·</i><i class="d">·</i><i class="d">·</i><span style="color:#569cd6">this</span><span style="color:#d4d4d4">.</span><span style="color:#9cdcfe">firestore</span><span style="color:#d4d4d4">.</span><span style="color:#dcdcaa">collection</span><span style="color:#d4d4d4">(</span><span style="color:#ce9178">&#x27;plates&#x27;</span><span style="color:#d4d4d4">).</span><span style="color:#dcdcaa">doc</span><span style="color:#d4d4d4">(</span><span style="color:#9cdcfe">id</span><span style="color:#d4d4d4">).</span><span style="color:#dcdcaa">update</span><span style="color:#d4d4d4">({</span><i class="d">·</i><span style="color:#9cdcfe">name</span><span style="color:#d4d4d4">:</span><i class="d">·</i><span style="color:#4fc1ff">name</span><i class="d">·</i><span style="color:#d4d4d4">});</span></div><div class="cl" style="top:456px"><i class="d">·</i><i class="d">·</i><i class="d">·</i><i class="d">·</i><i class="d">·</i><i class="d">·</i><i class="d">·</i><i class="d">·</i><span style="color:#569cd6">this</span><span style="color:#d4d4d4">.</span><span style="color:#9cdcfe">name</span><span style="color:#d4d4d4">.</span><span style="color:#dcdcaa">setValue</span><span style="color:#d4d4d4">(</span><span style="color:#ce9178">&quot;&quot;</span><span style="color:#d4d4d4">)</span></div><div class="cl" style="top:475px"><i class="d">·</i><i class="d">·</i><i class="d">·</i><i class="d">·</i><i class="d">·</i><i class="d">·</i><span style="color:#d4d4d4">});</span></div><div class="cl" style="top:494px"><i class="d">·</i><i class="d">·</i><i class="d">·</i><i class="d">·</i><span style="color:#d4d4d4">}</span></div><div class="cl" style="top:513px"><i class="d">·</i><i class="d">·</i><span style="color:#d4d4d4">}</span></div><div class="cl" style="top:532px"></div><div class="cl" style="top:551px"><span style="color:#d4d4d4">  </span><span style="color:#dcdcaa">addPlateToForm</span><span style="color:#d4d4d4">(</span><span style="color:#9cdcfe">plate</span><span style="color:#d4d4d4">: </span><span style="color:#4ec9b0">any</span><span style="color:#d4d4d4">) {</span></div><div class="cl" style="top:570px"><span style="color:#d4d4d4">    </span><span style="color:#569cd6">this</span><span style="color:#d4d4d4">.</span><span style="color:#9cdcfe">action</span><span style="color:#d4d4d4"> = </span><span style="color:#569cd6">false</span></div><div class="cl" style="top:589px"><span style="color:#d4d4d4">    </span><span style="color:#569cd6">this</span><span style="color:#d4d4d4">.</span><span style="color:#9cdcfe">name</span><span style="color:#d4d4d4">.</span><span style="color:#dcdcaa">setValue</span><span style="color:#d4d4d4">(</span><span style="color:#9cdcfe">plate</span><span style="color:#d4d4d4">)</span></div><div class="a" style="left:70px;top:208px;width:2px;height:19px;background:#aeafad"></div></div><div class="a" style="left:1240px;top:146px;width:112px;height:600px;background:#1e1e1e;overflow:hidden"><div class="a" style="left:0;top:0;width:1px;height:600px;background:#121212"></div><div class="a" style="left:1px;top:0;width:3px;height:600px;background:linear-gradient(90deg,#171717,#1e1e1e)"></div><svg class="a" style="left:0;top:0" width="112" height="600"><rect x="8" y="64" width="104" height="36" fill="#27325e"/><rect x="8" y="64" width="17" height="2" fill="#3a4c98"/><rect x="8" y="66" width="33" height="2" fill="#3a4c98"/><rect x="8" y="68" width="41" height="2" fill="#3a4c98"/><rect x="8" y="70" width="37" height="2" fill="#3a4c98"/><rect x="8" y="72" width="31" height="2" fill="#3a4c98"/><rect x="8" y="74" width="15" height="2" fill="#3a4c98"/><rect x="8" y="76" width="51" height="2" fill="#3a4c98"/><rect x="8" y="78" width="12" height="2" fill="#3a4c98"/><rect x="8" y="80" width="15" height="2" fill="#3a4c98"/><rect x="8" y="82" width="104" height="2" fill="#3a4c98"/><rect x="8" y="84" width="53" height="2" fill="#3a4c98"/><rect x="8" y="86" width="39" height="2" fill="#3a4c98"/><rect x="8" y="88" width="75" height="2" fill="#3a4c98"/><rect x="8" y="90" width="30" height="2" fill="#3a4c98"/><rect x="8" y="92" width="9" height="2" fill="#3a4c98"/><rect x="8" y="94" width="5" height="2" fill="#3a4c98"/><rect x="8" y="96" width="3" height="2" fill="#3a4c98"/><g opacity="0.42"><rect x="8" y="0" width="6" height="1.3" fill="#c586c0"/><rect x="15" y="0" width="1" height="1.3" fill="#d4d4d4"/><rect x="17" y="0" width="9" height="1.3" fill="#9cdcfe"/><rect x="27" y="0" width="1" height="1.3" fill="#d4d4d4"/><rect x="29" y="0" width="4" height="1.3" fill="#c586c0"/><rect x="34" y="0" width="15" height="1.3" fill="#ce9178"/><rect x="49" y="0" width="1" height="1.3" fill="#d4d4d4"/><rect x="8" y="2" width="6" height="1.3" fill="#c586c0"/><rect x="15" y="2" width="1" height="1.3" fill="#d4d4d4"/><rect x="17" y="2" width="16" height="1.3" fill="#9cdcfe"/><rect x="34" y="2" width="1" height="1.3" fill="#d4d4d4"/><rect x="36" y="2" width="4" height="1.3" fill="#c586c0"/><rect x="41" y="2" width="25" height="1.3" fill="#ce9178"/><rect x="66" y="2" width="1" height="1.3" fill="#d4d4d4"/><rect x="8" y="4" width="6" height="1.3" fill="#c586c0"/><rect x="15" y="4" width="1" height="1.3" fill="#d4d4d4"/><rect x="17" y="4" width="10" height="1.3" fill="#9cdcfe"/><rect x="28" y="4" width="1" height="1.3" fill="#d4d4d4"/><rect x="30" y="4" width="4" height="1.3" fill="#c586c0"/><rect x="35" y="4" width="6" height="1.3" fill="#ce9178"/><rect x="41" y="4" width="1" height="1.3" fill="#d4d4d4"/><rect x="8" y="6" width="6" height="1.3" fill="#c586c0"/><rect x="15" y="6" width="1" height="1.3" fill="#d4d4d4"/><rect x="17" y="6" width="11" height="1.3" fill="#9cdcfe"/><rect x="29" y="6" width="1" height="1.3" fill="#d4d4d4"/><rect x="31" y="6" width="4" height="1.3" fill="#c586c0"/><rect x="36" y="6" width="16" height="1.3" fill="#ce9178"/><rect x="52" y="6" width="1" height="1.3" fill="#d4d4d4"/><rect x="8" y="10" width="9" height="1.3" fill="#569cd6"/><rect x="18" y="10" width="5" height="1.3" fill="#4ec9b0"/><rect x="24" y="10" width="1" height="1.3" fill="#d4d4d4"/><rect x="10" y="12" width="2" height="1.3" fill="#9cdcfe"/><rect x="12" y="12" width="1" height="1.3" fill="#d4d4d4"/><rect x="14" y="12" width="6" height="1.3" fill="#4ec9b0"/><rect x="10" y="14" width="4" height="1.3" fill="#9cdcfe"/><rect x="14" y="14" width="1" height="1.3" fill="#d4d4d4"/><rect x="16" y="14" width="6" height="1.3" fill="#4ec9b0"/><rect x="8" y="16" width="1" height="1.3" fill="#d4d4d4"/><rect x="8" y="20" width="1" height="1.3" fill="#d4d4d4"/><rect x="9" y="20" width="9" height="1.3" fill="#4ec9b0"/><rect x="18" y="20" width="2" height="1.3" fill="#d4d4d4"/><rect x="10" y="22" width="8" height="1.3" fill="#9cdcfe"/><rect x="18" y="22" width="1" height="1.3" fill="#d4d4d4"/><rect x="20" y="22" width="12" height="1.3" fill="#ce9178"/><rect x="32" y="22" width="1" height="1.3" fill="#d4d4d4"/><rect x="10" y="24" width="11" height="1.3" fill="#9cdcfe"/><rect x="21" y="24" width="1" height="1.3" fill="#d4d4d4"/><rect x="23" y="24" width="25" height="1.3" fill="#ce9178"/><rect x="48" y="24" width="1" height="1.3" fill="#d4d4d4"/><rect x="10" y="26" width="9" height="1.3" fill="#9cdcfe"/><rect x="19" y="26" width="1" height="1.3" fill="#d4d4d4"/><rect x="21" y="26" width="1" height="1.3" fill="#d4d4d4"/><rect x="22" y="26" width="24" height="1.3" fill="#ce9178"/><rect x="46" y="26" width="1" height="1.3" fill="#d4d4d4"/><rect x="8" y="28" width="2" height="1.3" fill="#d4d4d4"/><rect x="8" y="30" width="6" height="1.3" fill="#c586c0"/><rect x="15" y="30" width="5" height="1.3" fill="#569cd6"/><rect x="21" y="30" width="15" height="1.3" fill="#4ec9b0"/><rect x="37" y="30" width="1" height="1.3" fill="#d4d4d4"/><rect x="10" y="32" width="5" height="1.3" fill="#9cdcfe"/><rect x="15" y="32" width="1" height="1.3" fill="#d4d4d4"/><rect x="17" y="32" width="6" height="1.3" fill="#4ec9b0"/><rect x="24" y="32" width="1" height="1.3" fill="#d4d4d4"/><rect x="26" y="32" width="8" height="1.3" fill="#ce9178"/><rect x="10" y="34" width="25" height="1.3" fill="#9cdcfe"/><rect x="35" y="34" width="1" height="1.3" fill="#d4d4d4"/><rect x="37" y="34" width="6" height="1.3" fill="#4ec9b0"/><rect x="10" y="36" width="14" height="1.3" fill="#9cdcfe"/><rect x="25" y="36" width="1" height="1.3" fill="#d4d4d4"/><rect x="27" y="36" width="5" height="1.3" fill="#569cd6"/><rect x="10" y="38" width="6" height="1.3" fill="#9cdcfe"/><rect x="16" y="38" width="1" height="1.3" fill="#d4d4d4"/><rect x="18" y="38" width="7" height="1.3" fill="#4ec9b0"/><rect x="26" y="38" width="1" height="1.3" fill="#d4d4d4"/><rect x="28" y="38" width="4" height="1.3" fill="#569cd6"/><rect x="10" y="40" width="5" height="1.3" fill="#9cdcfe"/><rect x="15" y="40" width="1" height="1.3" fill="#d4d4d4"/><rect x="17" y="40" width="5" height="1.3" fill="#4ec9b0"/><rect x="23" y="40" width="1" height="1.3" fill="#d4d4d4"/><rect x="25" y="40" width="2" height="1.3" fill="#d4d4d4"/><rect x="10" y="42" width="6" height="1.3" fill="#9cdcfe"/><rect x="16" y="42" width="1" height="1.3" fill="#d4d4d4"/><rect x="18" y="42" width="10" height="1.3" fill="#4ec9b0"/><rect x="28" y="42" width="1" height="1.3" fill="#d4d4d4"/><rect x="29" y="42" width="3" height="1.3" fill="#4ec9b0"/><rect x="32" y="42" width="4" height="1.3" fill="#d4d4d4"/><rect x="10" y="44" width="5" height="1.3" fill="#9cdcfe"/><rect x="15" y="44" width="1" height="1.3" fill="#d4d4d4"/><rect x="17" y="44" width="10" height="1.3" fill="#4ec9b0"/><rect x="27" y="44" width="1" height="1.3" fill="#d4d4d4"/><rect x="28" y="44" width="3" height="1.3" fill="#4ec9b0"/><rect x="31" y="44" width="2" height="1.3" fill="#d4d4d4"/><rect x="10" y="46" width="9" height="1.3" fill="#9cdcfe"/><rect x="19" y="46" width="1" height="1.3" fill="#d4d4d4"/><rect x="21" y="46" width="10" height="1.3" fill="#4ec9b0"/><rect x="31" y="46" width="1" height="1.3" fill="#d4d4d4"/><rect x="32" y="46" width="3" height="1.3" fill="#4ec9b0"/><rect x="35" y="46" width="4" height="1.3" fill="#d4d4d4"/><rect x="10" y="48" width="4" height="1.3" fill="#9cdcfe"/><rect x="15" y="48" width="1" height="1.3" fill="#d4d4d4"/><rect x="17" y="48" width="3" height="1.3" fill="#569cd6"/><rect x="21" y="48" width="11" height="1.3" fill="#4ec9b0"/><rect x="32" y="48" width="1" height="1.3" fill="#d4d4d4"/><rect x="33" y="48" width="2" height="1.3" fill="#ce9178"/><rect x="35" y="48" width="2" height="1.3" fill="#d4d4d4"/><rect x="10" y="50" width="4" height="1.3" fill="#9cdcfe"/><rect x="14" y="50" width="1" height="1.3" fill="#d4d4d4"/><rect x="16" y="50" width="6" height="1.3" fill="#4ec9b0"/><rect x="23" y="50" width="1" height="1.3" fill="#d4d4d4"/><rect x="25" y="50" width="6" height="1.3" fill="#ce9178"/><rect x="10" y="54" width="11" height="1.3" fill="#569cd6"/><rect x="21" y="54" width="1" height="1.3" fill="#d4d4d4"/><rect x="22" y="54" width="7" height="1.3" fill="#569cd6"/><rect x="30" y="54" width="9" height="1.3" fill="#9cdcfe"/><rect x="39" y="54" width="1" height="1.3" fill="#d4d4d4"/><rect x="41" y="54" width="16" height="1.3" fill="#4ec9b0"/><rect x="57" y="54" width="1" height="1.3" fill="#d4d4d4"/><rect x="59" y="54" width="1" height="1.3" fill="#d4d4d4"/><rect x="12" y="56" width="4" height="1.3" fill="#569cd6"/><rect x="16" y="56" width="1" height="1.3" fill="#d4d4d4"/><rect x="17" y="56" width="6" height="1.3" fill="#9cdcfe"/><rect x="24" y="56" width="1" height="1.3" fill="#d4d4d4"/><rect x="26" y="56" width="9" height="1.3" fill="#9cdcfe"/><rect x="35" y="56" width="1" height="1.3" fill="#d4d4d4"/><rect x="36" y="56" width="10" height="1.3" fill="#dcdcaa"/><rect x="46" y="56" width="1" height="1.3" fill="#d4d4d4"/><rect x="47" y="56" width="8" height="1.3" fill="#ce9178"/><rect x="55" y="56" width="2" height="1.3" fill="#d4d4d4"/><rect x="57" y="56" width="12" height="1.3" fill="#dcdcaa"/><rect x="69" y="56" width="3" height="1.3" fill="#d4d4d4"/><rect x="12" y="58" width="4" height="1.3" fill="#569cd6"/><rect x="16" y="58" width="1" height="1.3" fill="#d4d4d4"/><rect x="17" y="58" width="6" height="1.3" fill="#9cdcfe"/><rect x="24" y="58" width="1" height="1.3" fill="#d4d4d4"/><rect x="26" y="58" width="4" height="1.3" fill="#569cd6"/><rect x="10" y="60" width="1" height="1.3" fill="#d4d4d4"/><rect x="10" y="100" width="14" height="1.3" fill="#dcdcaa"/><rect x="24" y="100" width="1" height="1.3" fill="#d4d4d4"/><rect x="25" y="100" width="5" height="1.3" fill="#9cdcfe"/><rect x="30" y="100" width="1" height="1.3" fill="#d4d4d4"/><rect x="32" y="100" width="3" height="1.3" fill="#4ec9b0"/><rect x="35" y="100" width="1" height="1.3" fill="#d4d4d4"/><rect x="37" y="100" width="1" height="1.3" fill="#d4d4d4"/><rect x="12" y="102" width="4" height="1.3" fill="#569cd6"/><rect x="16" y="102" width="1" height="1.3" fill="#d4d4d4"/><rect x="17" y="102" width="6" height="1.3" fill="#9cdcfe"/><rect x="24" y="102" width="1" height="1.3" fill="#d4d4d4"/><rect x="26" y="102" width="5" height="1.3" fill="#569cd6"/><rect x="12" y="104" width="4" height="1.3" fill="#569cd6"/><rect x="16" y="104" width="1" height="1.3" fill="#d4d4d4"/><rect x="17" y="104" width="4" height="1.3" fill="#9cdcfe"/><rect x="21" y="104" width="1" height="1.3" fill="#d4d4d4"/><rect x="22" y="104" width="8" height="1.3" fill="#dcdcaa"/><rect x="30" y="104" width="1" height="1.3" fill="#d4d4d4"/><rect x="31" y="104" width="5" height="1.3" fill="#9cdcfe"/><rect x="36" y="104" width="1" height="1.3" fill="#d4d4d4"/><rect x="12" y="106" width="4" height="1.3" fill="#569cd6"/><rect x="16" y="106" width="1" height="1.3" fill="#d4d4d4"/><rect x="17" y="106" width="16" height="1.3" fill="#9cdcfe"/><rect x="34" y="106" width="1" height="1.3" fill="#d4d4d4"/><rect x="36" y="106" width="5" height="1.3" fill="#9cdcfe"/><rect x="10" y="108" width="1" height="1.3" fill="#d4d4d4"/><rect x="10" y="112" width="19" height="1.3" fill="#dcdcaa"/><rect x="29" y="112" width="1" height="1.3" fill="#d4d4d4"/><rect x="30" y="112" width="5" height="1.3" fill="#9cdcfe"/><rect x="35" y="112" width="1" height="1.3" fill="#d4d4d4"/><rect x="37" y="112" width="6" height="1.3" fill="#4ec9b0"/><rect x="43" y="112" width="1" height="1.3" fill="#d4d4d4"/><rect x="45" y="112" width="1" height="1.3" fill="#d4d4d4"/><rect x="12" y="114" width="3" height="1.3" fill="#569cd6"/><rect x="16" y="114" width="3" height="1.3" fill="#9cdcfe"/><rect x="20" y="114" width="1" height="1.3" fill="#d4d4d4"/><rect x="22" y="114" width="4" height="1.3" fill="#569cd6"/><rect x="26" y="114" width="1" height="1.3" fill="#d4d4d4"/><rect x="27" y="114" width="9" height="1.3" fill="#9cdcfe"/><rect x="36" y="114" width="1" height="1.3" fill="#d4d4d4"/><rect x="37" y="114" width="10" height="1.3" fill="#dcdcaa"/><rect x="47" y="114" width="1" height="1.3" fill="#d4d4d4"/><rect x="48" y="114" width="8" height="1.3" fill="#ce9178"/><rect x="56" y="114" width="1" height="1.3" fill="#d4d4d4"/><rect x="58" y="114" width="3" height="1.3" fill="#9cdcfe"/><rect x="62" y="114" width="2" height="1.3" fill="#569cd6"/><rect x="65" y="114" width="3" height="1.3" fill="#9cdcfe"/><rect x="68" y="114" width="1" height="1.3" fill="#d4d4d4"/><rect x="69" y="114" width="5" height="1.3" fill="#dcdcaa"/><rect x="74" y="114" width="1" height="1.3" fill="#d4d4d4"/><rect x="75" y="114" width="6" height="1.3" fill="#ce9178"/><rect x="81" y="114" width="1" height="1.3" fill="#d4d4d4"/><rect x="83" y="114" width="4" height="1.3" fill="#ce9178"/><rect x="87" y="114" width="1" height="1.3" fill="#d4d4d4"/><rect x="89" y="114" width="5" height="1.3" fill="#9cdcfe"/><rect x="94" y="114" width="1" height="1.3" fill="#d4d4d4"/><rect x="95" y="114" width="2" height="1.3" fill="#d4d4d4"/><rect x="14" y="116" width="3" height="1.3" fill="#9cdcfe"/><rect x="17" y="116" width="1" height="1.3" fill="#d4d4d4"/><rect x="18" y="116" width="15" height="1.3" fill="#dcdcaa"/><rect x="33" y="116" width="3" height="1.3" fill="#d4d4d4"/><rect x="36" y="116" width="9" height="1.3" fill="#dcdcaa"/><rect x="45" y="116" width="2" height="1.3" fill="#d4d4d4"/><rect x="47" y="116" width="3" height="1.3" fill="#9cdcfe"/><rect x="50" y="116" width="1" height="1.3" fill="#d4d4d4"/><rect x="52" y="116" width="3" height="1.3" fill="#4ec9b0"/><rect x="55" y="116" width="1" height="1.3" fill="#d4d4d4"/><rect x="57" y="116" width="2" height="1.3" fill="#d4d4d4"/><rect x="60" y="116" width="1" height="1.3" fill="#d4d4d4"/><rect x="16" y="118" width="3" height="1.3" fill="#569cd6"/><rect x="20" y="118" width="2" height="1.3" fill="#9cdcfe"/><rect x="23" y="118" width="1" height="1.3" fill="#d4d4d4"/><rect x="25" y="118" width="3" height="1.3" fill="#9cdcfe"/><rect x="28" y="118" width="4" height="1.3" fill="#d4d4d4"/><rect x="32" y="118" width="7" height="1.3" fill="#9cdcfe"/><rect x="39" y="118" width="1" height="1.3" fill="#d4d4d4"/><rect x="40" y="118" width="3" height="1.3" fill="#9cdcfe"/><rect x="43" y="118" width="1" height="1.3" fill="#d4d4d4"/><rect x="44" y="118" width="2" height="1.3" fill="#9cdcfe"/><rect x="46" y="118" width="1" height="1.3" fill="#d4d4d4"/><rect x="16" y="120" width="4" height="1.3" fill="#569cd6"/><rect x="20" y="120" width="1" height="1.3" fill="#d4d4d4"/><rect x="21" y="120" width="9" height="1.3" fill="#9cdcfe"/><rect x="30" y="120" width="1" height="1.3" fill="#d4d4d4"/><rect x="31" y="120" width="10" height="1.3" fill="#dcdcaa"/><rect x="41" y="120" width="1" height="1.3" fill="#d4d4d4"/><rect x="42" y="120" width="8" height="1.3" fill="#ce9178"/><rect x="50" y="120" width="2" height="1.3" fill="#d4d4d4"/><rect x="52" y="120" width="3" height="1.3" fill="#dcdcaa"/><rect x="55" y="120" width="1" height="1.3" fill="#d4d4d4"/><rect x="56" y="120" width="2" height="1.3" fill="#9cdcfe"/><rect x="58" y="120" width="2" height="1.3" fill="#d4d4d4"/><rect x="60" y="120" width="6" height="1.3" fill="#dcdcaa"/><rect x="66" y="120" width="3" height="1.3" fill="#d4d4d4"/><rect x="16" y="122" width="4" height="1.3" fill="#569cd6"/><rect x="20" y="122" width="1" height="1.3" fill="#d4d4d4"/><rect x="21" y="122" width="4" height="1.3" fill="#9cdcfe"/><rect x="25" y="122" width="1" height="1.3" fill="#d4d4d4"/><rect x="26" y="122" width="8" height="1.3" fill="#dcdcaa"/><rect x="34" y="122" width="1" height="1.3" fill="#d4d4d4"/><rect x="35" y="122" width="2" height="1.3" fill="#ce9178"/><rect x="37" y="122" width="1" height="1.3" fill="#d4d4d4"/><rect x="14" y="124" width="3" height="1.3" fill="#d4d4d4"/><rect x="10" y="126" width="1" height="1.3" fill="#d4d4d4"/><rect x="8" y="128" width="1" height="1.3" fill="#d4d4d4"/></g></svg><div class="a" style="left:2px;top:50px;width:2px;height:2px;background:#58a61c"></div></div><div class="a" style="left:1352px;top:146px;width:14px;height:600px;background:#1e1e1e;border-left:1px solid #2b2b2f;border-top:1px solid #2b2b2f"></div><div class="a" style="left:1352px;top:277px;width:14px;height:196px;background:#424242"></div><div class="a" style="left:1352px;top:277px;width:1px;height:196px;background:#5a5a5a"></div><div class="a" style="left:1353px;top:301px;width:4px;height:6px;background:#4f7a34"></div><div class="a" style="left:1353px;top:343px;width:13px;height:2px;background:#9a9a9a"></div><div class="a" style="left:360px;top:734px;width:771px;height:12px;background:rgba(121,121,121,0.4)"></div><div class="a" style="left:290px;top:146px;width:950px;height:3px;background:linear-gradient(#101010,rgba(30,30,30,0))"></div><div id="status" class="a"><svg class="a" style="left:16px;top:4px" width="12" height="15" viewBox="0 0 12 15"><circle cx="2.5" cy="2.5" r="1.8" fill="none" stroke="#ffffff" stroke-width="1.1"/><circle cx="2.5" cy="12.5" r="1.8" fill="none" stroke="#ffffff" stroke-width="1.1"/><circle cx="9.5" cy="4.5" r="1.8" fill="none" stroke="#ffffff" stroke-width="1.1"/><path d="M2.5 4.3v6.4M9.5 6.3q0 3-3.5 3.5T2.5 11" fill="none" stroke="#ffffff" stroke-width="1.1"/></svg><div class="t" style="left:32px;top:3px;font-size:12px;line-height:17px;letter-spacing:0.2px">master*</div><svg class="a" style="left:91.6px;top:3.8px" width="14" height="14" viewBox="0 0 16 16"><path fill="#fff" d="M2.006 8.267L.78 9.5 0 8.73l2.09-2.07.76.01 2.09 2.12-.76.76-1.167-1.18a5 5 0 0 0 9.4 1.96l.893.45a6 6 0 0 1-11.3-2.51zm11.987-.535l1.227-1.233.78.77-2.09 2.07-.76-.01-2.09-2.12.76-.76 1.167 1.180a5 5 0 0 0-9.4-1.96l-.893-.45a6 6 0 0 1 11.3 2.51z"/></svg><svg class="a" style="left:122px;top:5px" width="13" height="13" viewBox="0 0 13 13"><circle cx="6.5" cy="6.5" r="5.6" fill="none" stroke="#fff" stroke-width="1.1"/><path d="M4.3 4.3l4.4 4.4M8.7 4.3l-4.4 4.4" stroke="#fff" stroke-width="1.1"/></svg><div class="t" style="left:139px;top:3px;font-size:12px;line-height:17px">0</div><svg class="a" style="left:149px;top:5px" width="13" height="12" viewBox="0 0 13 12"><path d="M6.5 0.8 12.2 11.2H0.8z" fill="none" stroke="#fff" stroke-width="1.1" stroke-linejoin="round"/><path d="M6.5 4.3v3.6M6.5 8.8v1.2" stroke="#fff" stroke-width="1.2"/></svg><div class="t" style="left:165px;top:3px;font-size:12px;line-height:17px">0</div><div class="t" style="left:746px;top:3px;font-size:12px;line-height:17px;letter-spacing:-0.04px">Ln 33, Col 1 (599 selected)</div><div class="t" style="left:904px;top:3px;font-size:12px;line-height:17px;letter-spacing:-0.57px">Spaces: 2</div><div class="t" style="left:970px;top:3px;font-size:12px;line-height:17px;letter-spacing:-0.89px">UTF-8</div><div class="t" style="left:1019px;top:3px;font-size:12px;line-height:17px;letter-spacing:-1.55px">LF</div><div class="t" style="left:1047px;top:3px;font-size:12px;line-height:17px;letter-spacing:-0.13px">TypeScript</div><div class="t" style="left:1137px;top:3px;font-size:12px;line-height:17px;letter-spacing:-0.49px">Go Live</div><div class="t" style="left:1193px;top:3px;font-size:12px;line-height:17px;letter-spacing:-0.32px">4.0.2</div><svg class="a" style="left:1121px;top:5px" width="12" height="13" viewBox="0 0 12 13"><circle cx="6" cy="5.5" r="1.6" fill="#fff"/><path d="M6 7v5.5" stroke="#fff" stroke-width="1.6"/><path d="M3.2 8.3a4 4 0 1 1 5.6 0M1.6 10a6.2 6.2 0 1 1 8.8 0" fill="none" stroke="#fff" stroke-width="1.1"/></svg><svg class="a" style="left:1236px;top:4px" width="14" height="14" viewBox="0 0 14 14"><circle cx="5" cy="5.5" r="2.5" fill="none" stroke="#fff" stroke-width="1.1"/><path d="M0.8 13q0.5-4 4.2-4t4.2 4M6 1.5h7v5.5h-3" fill="none" stroke="#fff" stroke-width="1.1"/><path d="M9.5 3.2l1 1 2-2" fill="none" stroke="#fff" stroke-width="1"/></svg><svg class="a" style="left:1266px;top:4px" width="13" height="15" viewBox="0 0 13 15"><path d="M6.5 1.2q4.2 0 4.2 4.5v4.3l1.3 1.6H1l1.3-1.6V5.7q0-4.5 4.2-4.5z" fill="none" stroke="#fff" stroke-width="1.1" stroke-linejoin="round"/><path d="M5 13a1.6 1.6 0 0 0 3 0" fill="none" stroke="#fff" stroke-width="1.1"/></svg></div></body></html>
